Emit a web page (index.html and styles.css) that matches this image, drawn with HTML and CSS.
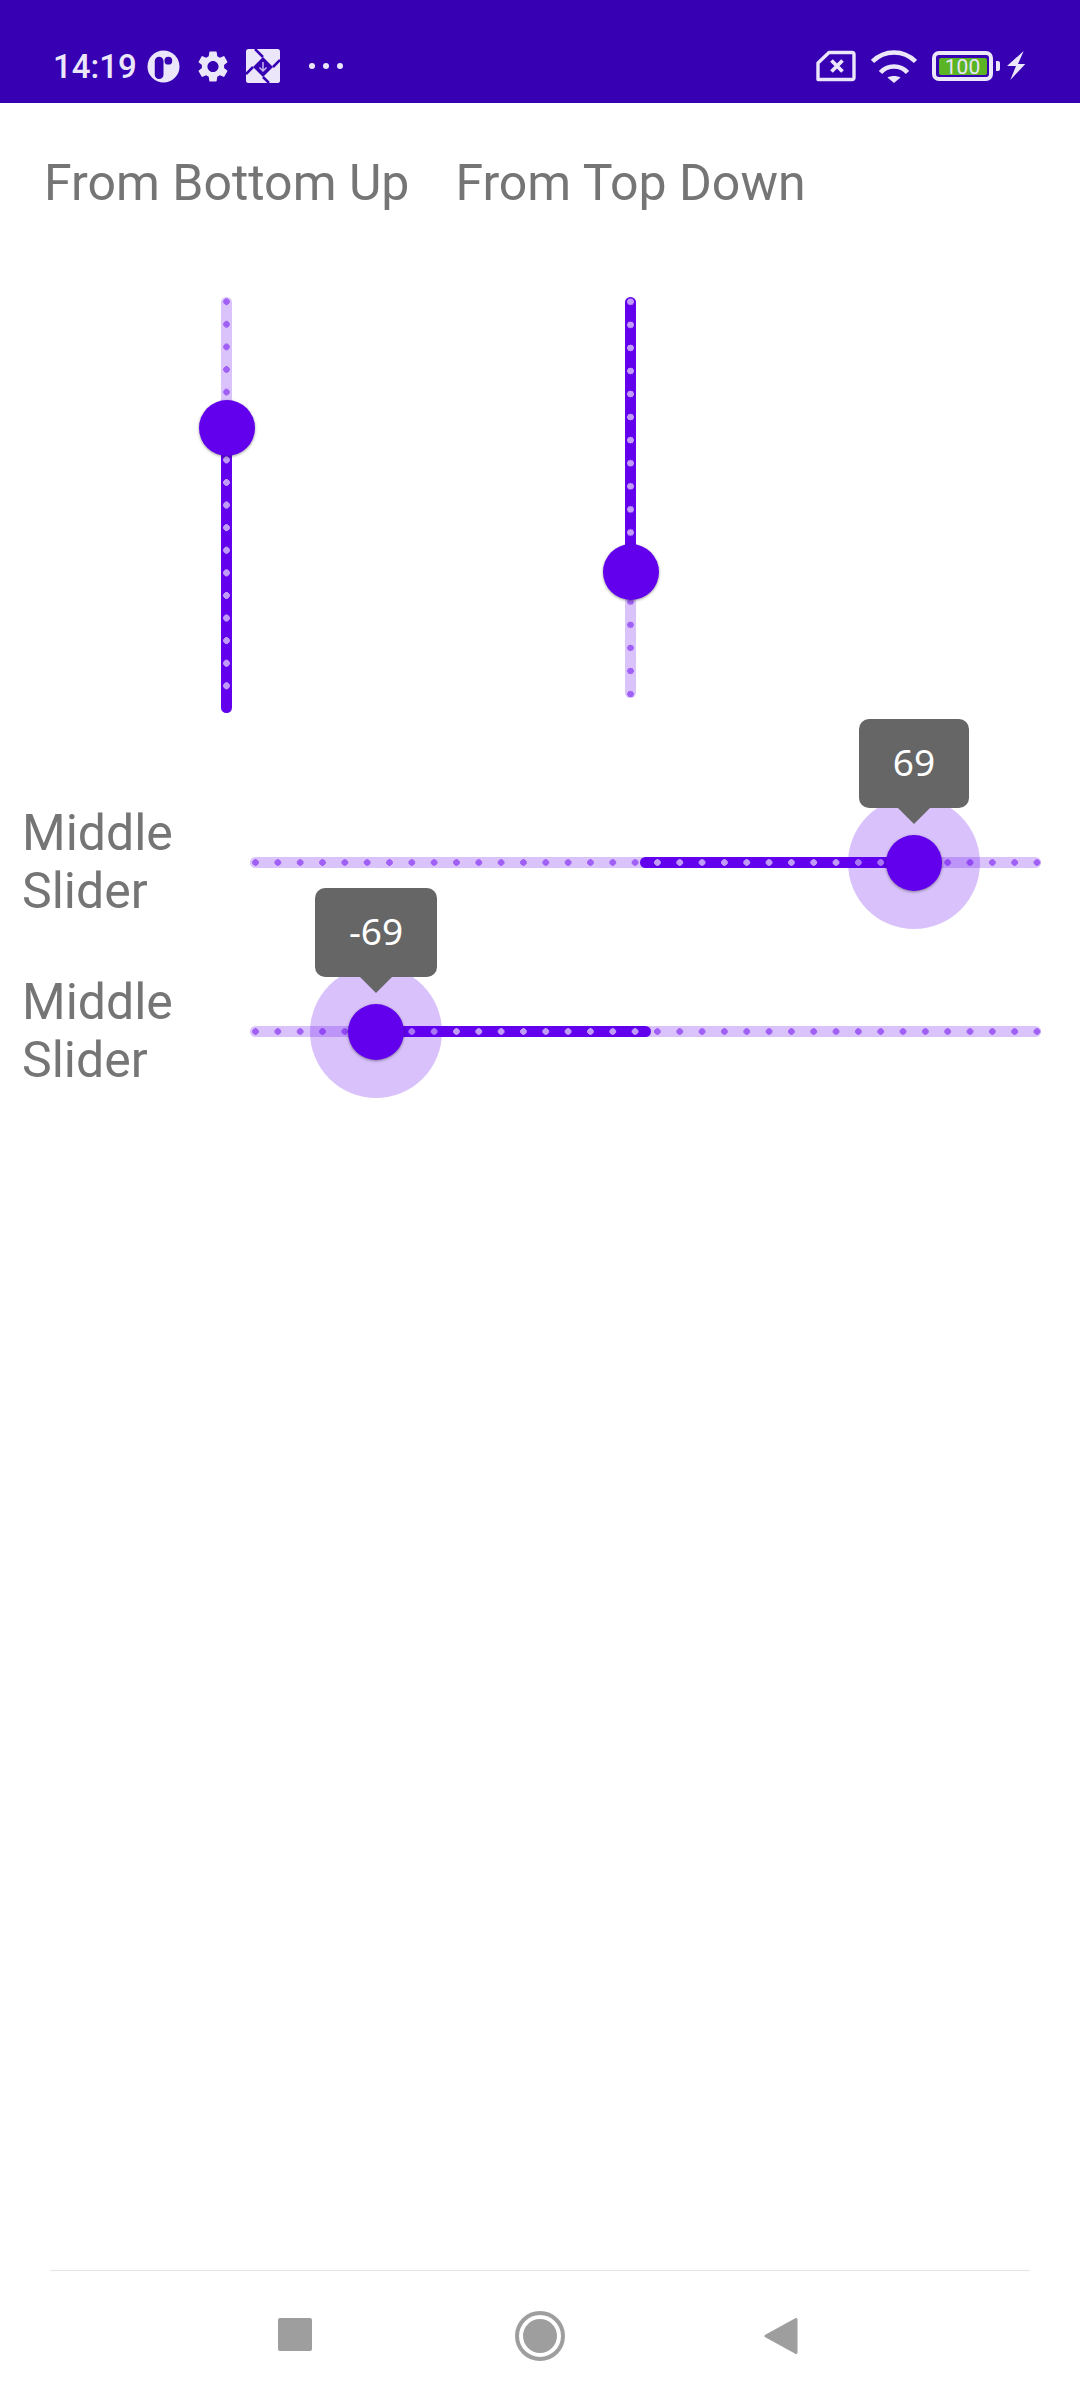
FILE: index.html
```html
<!DOCTYPE html>
<html lang="en">
<head>
    <meta charset="UTF-8">
    <title>Slider</title>
    <link rel="stylesheet" href="styles.css">
</head>
<body>
    <div class="statusbar">
        <span class="time">14:19</span>
        <svg class="ic-p" viewBox="0 0 34 34">
            <circle cx="17" cy="17" r="16.5" fill="#ebe6fa"/>
            <rect x="8" y="7" width="9" height="23" rx="4.5" fill="#3700b3"/>
            <circle cx="22" cy="11" r="4" fill="#3700b3"/>
        </svg>
        <svg class="ic-gear" viewBox="2.500 2 19 20">
            <path fill="#ebe6fa" d="M19.14 12.94c.04-.3.06-.61.06-.94 0-.32-.02-.64-.07-.94l2.03-1.58c.18-.14.23-.41.12-.61l-1.92-3.32c-.12-.22-.37-.29-.59-.22l-2.39.96c-.5-.38-1.03-.7-1.62-.94l-.36-2.54c-.04-.24-.24-.41-.48-.41h-3.84c-.24 0-.43.17-.47.41l-.36 2.54c-.59.24-1.13.57-1.62.94l-2.39-.96c-.22-.08-.47 0-.59.22L2.74 8.87c-.12.21-.08.47.12.61l2.03 1.58c-.05.3-.09.63-.09.94s.02.64.07.94l-2.03 1.58c-.18.14-.23.41-.12.61l1.92 3.32c.12.22.37.29.59.22l2.39-.96c.5.38 1.03.7 1.62.94l.36 2.54c.05.24.24.41.48.41h3.84c.24 0 .44-.17.47-.41l.36-2.54c.59-.24 1.13-.56 1.62-.94l2.39.96c.22.08.47 0 .59-.22l1.92-3.32c.12-.22.07-.47-.12-.61l-2.01-1.58zM12 15.6c-1.98 0-3.6-1.62-3.6-3.6s1.62-3.6 3.6-3.6 3.6 1.62 3.6 3.6-1.62 3.6-3.6 3.6z"/>
        </svg>
        <svg class="ic-box" viewBox="0 0 34 34">
            <rect width="34" height="34" rx="2.500" fill="#ebe6fa"/>
            <path d="M17 8L27 18 17 28 7 18z" fill="#3700b3"/>
            <path d="M17 8L9 0M27 18L34 11M17 28L23 34M7 18L0 25" stroke="#3700b3" stroke-width="2.500" fill="none"/>
            <path d="M17 13v9M13.500 18.500l3.500 3.500 3.500-3.500" stroke="#c9b8f0" stroke-width="1.500" fill="none"/>
        </svg>
        <div class="dots"><i></i><i></i><i></i></div>
        <div class="status-right">
            <svg class="ic-sim" viewBox="0 0 40 32">
                <path d="M2 29.500V13L13 2.500H36a2 2 0 0 1 2 2V27.500a2 2 0 0 1-2 2z" fill="none" stroke="#ebe6fa" stroke-width="3.400" stroke-linejoin="round"/>
                <path d="M15.500 10.500l11 11M26.500 10.500l-11 11" stroke="#ebe6fa" stroke-width="3.800"/>
            </svg>
            <svg class="ic-wifi" viewBox="0 0 46 34">
                <path d="M1.500 12.500C13.500 .5 32.500 .5 44.500 12.500M9.500 23.500C16.500 15.500 29.500 15.500 36.500 23.500" fill="none" stroke="#ebe6fa" stroke-width="4.500"/>
                <path d="M16.500 28.500C20 26.500 26 26.500 29.500 28.500L23 34z" fill="#ebe6fa"/>
            </svg>
            <div class="battery">
                <div class="batt-body"><div class="batt-fill">100</div></div>
                <div class="batt-tip"></div>
            </div>
            <svg class="ic-bolt" viewBox="0 0 20 30">
                <path d="M16.700 0L0 15H9L3.300 29 18.300 13H11z" fill="#ebe6fa"/>
            </svg>
        </div>
    </div>

    <div class="content">
        <div class="heads">
            <div class="head head-1">From Bottom Up</div>
            <div class="head">From Top Down</div>
        </div>

        <div class="verticals">
            <div class="vslider vs-1">
                <div class="vactive"></div>
                <div class="vticks"></div>
                <div class="vticks-on"></div>
                <div class="thumb vthumb"></div>
            </div>
            <div class="vslider vs-2">
                <div class="vactive"></div>
                <div class="vticks"></div>
                <div class="vticks-on"></div>
                <div class="thumb vthumb"></div>
            </div>
        </div>

        <div class="row">
            <div class="label">Middle<br>Slider</div>
            <div class="slider">
                <div class="ticks"></div>
                <div class="active active-right"></div>
                <div class="halo halo-1"></div>
                <div class="thumb thumb-1"></div>
                <div class="tip tip-1">69</div>
            </div>
        </div>
        <div class="row row-2">
            <div class="label">Middle<br>Slider</div>
            <div class="slider">
                <div class="ticks"></div>
                <div class="active active-left"></div>
                <div class="halo halo-2"></div>
                <div class="thumb thumb-2"></div>
                <div class="tip tip-2">-69</div>
            </div>
        </div>
    </div>

    <div class="navbar">
        <div class="nav-icons">
            <div class="nav-square"></div>
            <div class="nav-home"><div></div></div>
            <svg class="nav-back" viewBox="0 0 34 38">
                <path d="M32 2.500V35.500L2 19z" fill="#9e9e9e" stroke="#9e9e9e" stroke-width="3" stroke-linejoin="round"/>
            </svg>
        </div>
    </div>
</body>
</html>
```

FILE: styles.css
```css
* {
    margin: 0;
    padding: 0;
    box-sizing: border-box;
}
body {
    width: 1080px;
    height: 2400px;
    background: #fff;
    font-family: Roboto, sans-serif;
    display: flex;
    flex-direction: column;
    overflow: hidden;
}

/* status bar */
.statusbar {
    height: 103px;
    background: #3700b3;
    display: flex;
    align-items: center;
    padding: 29px 0 0 53px;
    flex-shrink: 0;
    color: #ebe6fa;
}
.time {
    font-size: 33px;
    font-weight: 500;
    width: 94px;
}
.ic-p { width: 33px; height: 33px; }
.ic-gear { width: 30px; height: 31px; margin-left: 18px; }
.ic-box { width: 34px; height: 34px; margin-left: 18px; }
.dots { display: flex; gap: 8px; margin-left: 29px; }
.dots i {
    width: 6px;
    height: 6px;
    border-radius: 50%;
    background: #ebe6fa;
}
.status-right {
    margin-left: auto;
    display: flex;
    align-items: center;
    padding-right: 53px;
}
.ic-sim { width: 40px; height: 32px; }
.ic-wifi { width: 46px; height: 34px; margin-left: 15px; }
.battery { display: flex; align-items: center; margin-left: 15px; }
.batt-body {
    width: 61px;
    height: 30px;
    border: 4px solid #ebe6fa;
    border-radius: 7px;
    padding: 2.500px;
}
.batt-fill {
    height: 100%;
    background: #5ab424;
    border-radius: 2px;
    color: #ebe6fa;
    font-size: 21px;
    line-height: 18px;
    text-align: center;
}
.batt-tip {
    width: 4px;
    height: 10px;
    margin-left: 3px;
    background: #ebe6fa;
    border-radius: 0 2px 2px 0;
}
.ic-bolt { width: 20px; height: 30px; margin-left: 7px; }

/* content */
.content { flex: 1; }
.heads {
    display: flex;
    padding: 52px 0 0 44px;
    font-size: 50px;
    line-height: 56px;
    color: #757575;
}
.head-1 { margin-right: 46px; }

.verticals {
    display: flex;
    padding: 86px 0 0 221px;
    height: 596px;
    align-items: flex-start;
}

/* vertical sliders */
.vslider {
    position: relative;
    width: 11px;
    background: #dac3fb;
    border-radius: 5.500px;
}
.vs-1 { height: 416px; }
.vs-2 { height: 401px; margin-left: 393px; }
.vactive {
    position: absolute;
    left: 0;
    width: 11px;
    background: #6200ee;
}
.vs-1 .vactive { top: 130px; bottom: 0; border-radius: 0 0 5.500px 5.500px; }
.vs-2 .vactive { top: 0; height: 274px; border-radius: 5.500px 5.500px 0 0; }
.vticks, .vticks-on {
    position: absolute;
    left: 0;
    width: 11px;
}
.vs-1 .vticks {
    top: 0;
    height: 394px;
    background: radial-gradient(circle, #a060f5 3px, transparent 3.500px) 0 -6.600px / 11px 22.600px repeat-y;
}
.vs-1 .vticks-on {
    top: 130px;
    height: 264px;
    background: radial-gradient(circle, #c09bf9 3px, transparent 3.500px) 0 -136.600px / 11px 22.600px repeat-y;
}
.vs-2 .vticks {
    top: 0;
    height: 401px;
    background: radial-gradient(circle, #a060f5 3px, transparent 3.500px) 0 -6.840px / 11px 23.080px repeat-y;
}
.vs-2 .vticks-on {
    top: 0;
    height: 274px;
    background: radial-gradient(circle, #c09bf9 3px, transparent 3.500px) 0 -6.840px / 11px 23.080px repeat-y;
}
.thumb {
    position: absolute;
    width: 56px;
    height: 56px;
    border-radius: 50%;
    background: #6200ee;
    box-shadow: 0 1px 3px rgba(0, 0, 0, 0.4);
}
.vs-1 .vthumb { left: -22px; top: 103px; }
.vs-2 .vthumb { left: -22px; top: 247px; }

/* horizontal rows */
.row {
    display: flex;
    align-items: center;
    height: 111px;
    padding-left: 22px;
}
.row-2 { margin-top: 58px; }
.label {
    width: 228px;
    font-size: 50px;
    line-height: 58px;
    color: #757575;
    margin-top: -2px;
}
.slider {
    position: relative;
    width: 791px;
    height: 11px;
    background: #dac3fb;
    border-radius: 5.500px;
}
.ticks {
    position: absolute;
    left: 0;
    top: 0;
    width: 791px;
    height: 11px;
    background: radial-gradient(circle, #a060f5 3px, transparent 3.500px) -5.665px 0 / 22.330px 11px repeat-x;
}
.active {
    position: absolute;
    top: 0;
    height: 11px;
    border-radius: 5.500px;
    background-color: #6200ee;
    background-image: radial-gradient(circle, #c09bf9 3px, transparent 3.500px);
    background-size: 22.330px 11px;
    background-repeat: repeat-x;
}
.active-right { left: 390px; width: 274px; background-position: -395.665px 0; }
.active-left { left: 126px; width: 275px; background-position: -131.665px 0; }
.halo {
    position: absolute;
    width: 132px;
    height: 132px;
    top: -60px;
    border-radius: 50%;
    background: rgba(98, 0, 238, 0.24);
}
.halo-1 { left: 598px; }
.halo-2 { left: 60px; }
.thumb-1 { left: 636px; top: -22px; }
.thumb-2 { left: 98px; top: -22px; }
.tip {
    position: absolute;
    height: 89px;
    top: -138px;
    background: #666;
    border-radius: 10px;
    color: #fff;
    font-family: "Noto Sans", sans-serif;
    font-size: 37px;
    line-height: 85px;
    text-align: center;
}
.tip::after {
    content: "";
    position: absolute;
    left: 50%;
    top: 100%;
    margin-left: -16px;
    border-left: 16px solid transparent;
    border-right: 16px solid transparent;
    border-top: 16px solid #666;
}
.tip-1 { left: 609px; width: 110px; }
.tip-2 { left: 65px; width: 122px; }

/* nav bar */
.navbar {
    height: 130px;
    margin: 0 50px;
    border-top: 1px solid #e5e5e5;
    flex-shrink: 0;
}
.nav-icons {
    position: relative;
    height: 129px;
}
.nav-square {
    position: absolute;
    left: 228px;
    top: 47px;
    width: 34px;
    height: 33px;
    background: #9e9e9e;
    border-radius: 2px;
}
.nav-home {
    position: absolute;
    left: 465px;
    top: 40px;
    width: 50px;
    height: 50px;
    border: 4px solid #9e9e9e;
    border-radius: 50%;
    display: flex;
    align-items: center;
    justify-content: center;
}
.nav-home div {
    width: 34px;
    height: 34px;
    border-radius: 50%;
    background: #9e9e9e;
}
.nav-back {
    position: absolute;
    left: 714px;
    top: 46px;
    width: 34px;
    height: 38px;
}
```
